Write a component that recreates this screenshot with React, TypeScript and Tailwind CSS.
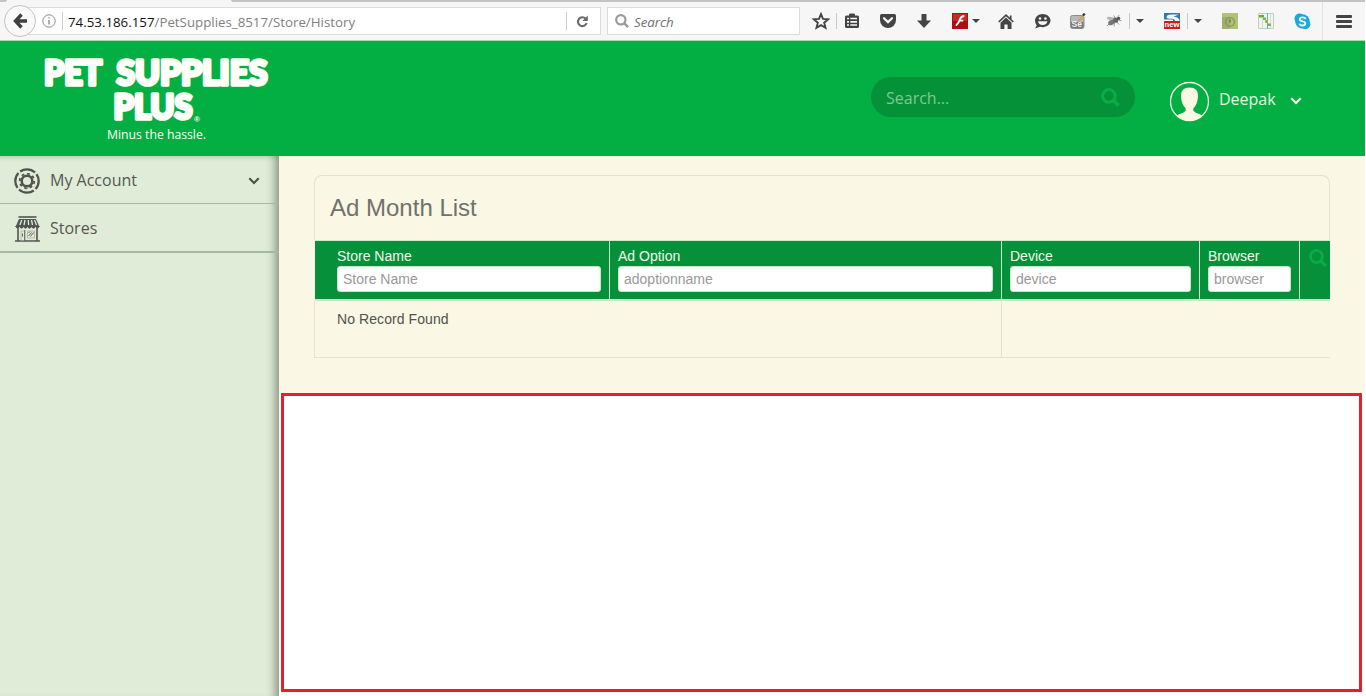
import React from "react";

const Caret = () => (
  <svg width="8" height="4" viewBox="0 0 8 4"><path d="M0 0h8L4 4z" fill="#444" /></svg>
);

const Chevron = ({ color }: { color: string }) => (
  <svg width="12" height="8" viewBox="0 0 12 8" fill="none" stroke={color} strokeWidth="2.2">
    <path d="M1.3 1.3 6 6l4.7-4.7" />
  </svg>
);

const Magnifier = ({ size, color }: { size: number; color: string }) => (
  <svg width={size} height={size} viewBox="0 0 18 18" fill="none" stroke={color}>
    <circle cx="7.5" cy="7.5" r="6" strokeWidth="2.8" />
    <path d="m11.8 11.8 5 5" strokeWidth="3.2" />
  </svg>
);

const Slot = ({ children }: { children: React.ReactNode }) => (
  <div className="flex w-9 shrink-0 items-center justify-center">{children}</div>
);

const Drop = () => (
  <div className="flex w-[22px] shrink-0 items-center">
    <span className="-ml-[3px] h-4 w-px bg-[#c8c8c8]" />
    <span className="ml-1.5"><Caret /></span>
  </div>
);

function BrowserBar() {
  return (
    <div className="flex h-[41px] w-[1365px] flex-col border-b border-[#a5d8b4] bg-[#f6f6f6]">
      <div className="flex h-0.5 shrink-0">
        <div className="w-[7px] rounded-br bg-[#c3c3c3]" />
        <div className="w-[224px]" />
        <div className="flex-1 rounded-bl bg-[#c3c3c3]" />
      </div>
      <div className="flex h-[38px] items-center">
        <div className="z-10 ml-1 flex size-8 shrink-0 items-center justify-center rounded-full border border-[#c3c3c3] bg-[#f9f9f9]">
          <svg width="14" height="16" viewBox="0 0 14 16" fill="none" stroke="#404040" strokeWidth="3.4">
            <path d="M8.5 1.500 2.500 8l6 6.500M3 8h11" />
          </svg>
        </div>
        <div className="-ml-4 flex h-7 w-[581px] shrink-0 items-center border border-[#dcdcdc] bg-white">
          <svg className="ml-[21px]" width="14" height="14" viewBox="0 0 14 14" fill="none" stroke="#8c8c8c">
            <circle cx="7" cy="7" r="6.2" />
            <path d="M7 6v4.500M7 3.200v1.400" strokeWidth="1.4" />
          </svg>
          <span className="ml-1.5 h-[18px] w-px bg-[#cfcfcf]" />
          <span className="ml-[5px] w-[498px] whitespace-nowrap pt-[3px] font-['Open_Sans',sans-serif] text-[13.3px] text-[#808080]">
            <span className="text-[#111]">74.53.186.157</span>/PetSupplies_8517/Store/History
          </span>
          <span className="h-[18px] w-px bg-[#cfcfcf]" />
          <svg className="ml-[9px]" width="13" height="13" viewBox="0 0 13 13">
            <path d="M9.600 3.700A4.400 4.400 0 1 0 10.600 8" fill="none" stroke="#6b6b6b" strokeWidth="2.1" />
            <path d="M11.800.5v5.400H6.400z" fill="#6b6b6b" />
          </svg>
        </div>
        <div className="ml-1.5 flex h-7 w-[193px] shrink-0 items-center border border-[#dcdcdc] bg-white pl-[7px]">
          <Magnifier size={14} color="#999" />
          <span className="ml-[5px] pt-[3px] font-['Open_Sans',sans-serif] text-[13.3px] italic text-[#707070]">Search</span>
        </div>
        <svg className="ml-3 shrink-0" width="18" height="18" viewBox="0 0 18 18" fill="none" stroke="#444" strokeWidth="1.9">
          <path d="m9 2.100 2 4.800 5.200.4-4 3.400 1.300 5.100L9 13.100l-4.500 2.700 1.300-5.100-4-3.400L7 6.900z" />
        </svg>
        <span className="ml-1.5 h-4 w-px bg-[#c8c8c8]" />
        <div className="-ml-[3px] flex">
          <Slot>
            <svg width="16" height="16" viewBox="0 0 16 16">
              <path d="M5 2.500V1.700Q5 .5 6.200.5h3.600Q11 .5 11 1.700v.8h2.500q1.500 0 1.500 1.500v9.500q0 1.500-1.500 1.500h-11Q1 15 1 13.500V4q0-1.500 1.500-1.500z" fill="#444" />
              <path d="M3 5.500h2M6.300 5.500H13M3 8.800h2M6.300 8.800H13M3 12h2M6.300 12H13" stroke="#f6f6f6" strokeWidth="1.7" />
            </svg>
          </Slot>
          <Slot>
            <svg width="16" height="14" viewBox="0 0 16 14">
              <path d="M1.500 0h13Q16 0 16 1.500V6a8 8 0 0 1-16 0V1.500Q0 0 1.500 0z" fill="#444" />
              <path d="m4 4.200 4 3.900 4-3.900" fill="none" stroke="#f6f6f6" strokeWidth="2.2" strokeLinecap="round" />
            </svg>
          </Slot>
          <Slot>
            <svg width="14" height="14" viewBox="0 0 14 14"><path d="M4.500 0h5v6.500H14L7 14 0 6.500h4.500z" fill="#444" /></svg>
          </Slot>
          <Slot>
            <svg width="16" height="16" viewBox="0 0 16 16">
              <path d="M0 0h16v16H0z" fill="#a80f12" /><path d="M1 1h14v7H1z" fill="#c22b26" />
              <path d="M12.400 3Q9 3 8 6.300T4 12.700M7.200 7.700h4" fill="none" stroke="#fff" strokeWidth="1.8" />
            </svg>
          </Slot>
          <div className="flex w-2.5 items-center"><div className="-ml-1.5 flex shrink-0"><Caret /></div></div>
          <Slot>
            <svg width="16" height="15" viewBox="0 0 16 15">
              <path d="M.7 8 8 1.200 15.300 8M12.700 1.500V5" fill="none" stroke="#444" strokeWidth="1.7" />
              <path d="m8 3.500 5.500 5.200V15H9.600v-4.400H6.400V15H2.500V8.700z" fill="#444" />
            </svg>
          </Slot>
          <Slot>
            <svg width="17" height="15" viewBox="0 0 17 15">
              <path d="M8.700 0C13 0 16.500 2.900 16.500 6.600s-3.500 6.600-7.800 6.600q-1.500 0-2.800-.4L1 14.600l1.700-3.200Q1 9.500 1 6.600C1 2.900 4.400 0 8.700 0z" fill="#444" />
              <circle cx="6" cy="4.5" r="1.3" fill="#f6f6f6" /><circle cx="11.4" cy="4.5" r="1.3" fill="#f6f6f6" />
              <path d="M4 7.200h9.400q-.7 3.800-4.700 3.800T4 7.200z" fill="#f6f6f6" />
            </svg>
          </Slot>
          <Slot>
            <svg width="16" height="16" viewBox="0 0 16 16">
              <rect x=".5" y="2.500" width="13.500" height="13" rx="2" fill="#b8b8b8" stroke="#8c8c8c" />
              <path d="M1 9h12.500v4.500q0 1.500-1.500 1.500H2.500Q1 15 1 13.500z" fill="#777" />
              <text x="1.5" y="14.2" fontSize="8.5" fontWeight="700" fill="#f3f3f3" fontFamily="Liberation Sans">Se</text>
              <path d="m8.500 8.500 5-6.500" stroke="#cfa653" strokeWidth="2.2" /><path d="m13 2.700 1.700-2.200" stroke="#333" strokeWidth="2.2" />
            </svg>
          </Slot>
          <Slot>
            <svg width="16" height="14" viewBox="0 0 16 14" fill="none">
              <ellipse cx="5" cy="4.8" rx="4.2" ry="1.8" transform="rotate(14 5 4.8)" fill="#b5b5b5" />
              <ellipse cx="5.500" cy="8.500" rx="3.500" ry="2.400" transform="rotate(-25 5.5 8.5)" fill="#777" />
              <circle cx="9.700" cy="6.200" r="2.600" fill="#666" /><circle cx="12.600" cy="4.400" r="1.700" fill="#555" />
              <path d="m9 4-1-2.500M11.500 3.500 13 1M12.500 6l3 .8M11 8l2 2.500M8.500 9l-.5 3.500M3.500 9.500 1 12" stroke="#888" strokeWidth=".8" />
            </svg>
          </Slot>
          <Drop />
          <Slot>
            <svg width="16" height="16" viewBox="0 0 16 16">
              <path d="M0 0h16v8H0z" fill="#287ea5" />
              <path d="M15 1.500H7Q2.500 1.800 2.500 4.200 3 6 8 5.800q3 .2 3 2.200h4.500Q15.500 4 9.500 3.800 12 2.500 15 1.500zM0 6.500h9V8H0z" fill="#eef7fa" />
              <path d="M0 8h16v8H0z" fill="#d51820" />
              <text x=".5" y="14.3" fontSize="7.5" fontWeight="700" fill="#fff" fontFamily="Liberation Sans" textLength="15" lengthAdjust="spacingAndGlyphs">new</text>
            </svg>
          </Slot>
          <Drop />
          <Slot>
            <svg width="16" height="16" viewBox="0 0 16 16" fill="none">
              <path d="M0 0h16v16H0z" fill="#b2c17a" /><path d="M0 4h8v12H0z" fill="#a0b069" />
              <circle cx="8" cy="9" r="4.3" stroke="#86955b" strokeWidth="1.3" /><path d="M8 6.500v3" stroke="#74824c" strokeWidth="1.6" />
            </svg>
          </Slot>
          <Slot>
            <svg width="16" height="16" viewBox="0 0 16 16">
              <path d="M.5.5h15v15H.5z" fill="#f2f5ef" stroke="#c4cec0" /><path d="M4.500 1v14M12.500 1v14" stroke="#d5dccf" />
              <path d="M1 2h5v2.500H1z" fill="#6fac3d" /><path d="M5 4.500h3V7H5zM10 10.500h3V13h-3z" fill="#78b64a" />
              <path d="M7 7h2v3H7z" fill="#dda42f" /><path d="M9.500 0v16" stroke="#51b9bd" />
            </svg>
          </Slot>
          <Slot>
            <svg width="17" height="17" viewBox="0 0 17 17">
              <circle cx="5.5" cy="5.5" r="5" fill="#19a9dc" /><circle cx="11.3" cy="11.3" r="5" fill="#19a9dc" /><circle cx="8.4" cy="8.4" r="7.2" fill="#19a9dc" />
              <path d="M11.400 6Q11 4.400 8.500 4.400T5.700 6.300q0 1.500 2.800 2t2.800 2.200q0 2-2.800 2-2.700 0-3-1.900" fill="none" stroke="#fff" strokeWidth="1.8" />
            </svg>
          </Slot>
        </div>
        <span className="ml-0.5 h-[38px] w-px bg-[#e2e2e2]" />
        <svg className="ml-[13px]" width="16" height="13" viewBox="0 0 16 13" fill="#444">
          <rect width="16" height="3" rx="1" /><rect y="5" width="16" height="3" rx="1" /><rect y="10" width="16" height="3" rx="1" />
        </svg>
      </div>
    </div>
  );
}

function Header() {
  return (
    <header className="flex h-[115px] w-[1365px] bg-[#03af42] font-['Open_Sans',sans-serif]">
      <svg className="ml-10 mt-2.5 shrink-0 overflow-visible" width="235" height="95" viewBox="40 51 235 95" fill="#fdfff8">
        <g fontFamily="Lato" fontWeight="900" fontSize="34" stroke="#fdfff8" strokeWidth="3.6" strokeLinejoin="round">
          <text x="44" y="84.5" textLength="58" lengthAdjust="spacingAndGlyphs">PET</text>
          <text x="116.500" y="84.5" textLength="151" lengthAdjust="spacingAndGlyphs">SUPPLIES</text>
          <text x="113.500" y="119.300" textLength="79" lengthAdjust="spacingAndGlyphs">PLUS</text>
        </g>
        <text x="194" y="121.500" fontFamily="Liberation Sans" fontSize="8" fontWeight="700">®</text>
        <text x="107" y="138.500" fontFamily="Open Sans" fontWeight="500" fontSize="12.500" textLength="99" lengthAdjust="spacingAndGlyphs">Minus the hassle.</text>
      </svg>
      <div className="ml-[596px] mt-9 flex h-10 w-[264px] items-center justify-between rounded-full bg-[#059138] pl-[15px] pr-[15px]">
        <span className="pt-0.5 text-base text-[#80c795]">Search...</span>
        <Magnifier size={19} color="#08ae45" />
      </div>
      <div className="ml-[34px] mt-10 flex h-[41px] items-center">
        <svg width="41" height="41" viewBox="0 0 41 41">
          <circle cx="20.5" cy="20.5" r="19" fill="none" stroke="#fbfdf0" strokeWidth="1.3" />
          <path d="M20.500 6.500Q29.500 6.500 29 15q-.2 8-4.700 12.500v2.300q1.700 2.200 5 3 2.500.6 3.700 1.700-5.200 5.300-12.500 5.300T8 34.500q1.200-1.100 3.700-1.700 3.300-.8 5-3v-2.300Q12.200 23 12 15q-.5-8.500 8.500-8.500z" fill="#fbf8e4" />
        </svg>
        <span className="-mt-[5px] ml-[9px] text-base text-[#e4f6e0]">Deepak</span>
        <span className="-mt-0.5 ml-3.5"><Chevron color="#fbfdf0" /></span>
      </div>
    </header>
  );
}

function Sidebar() {
  return (
    <aside className="w-[279px] shrink-0 bg-[#e0ecd7] font-['Open_Sans',sans-serif] text-base text-[#545853] shadow-[inset_-11px_0_9px_-7px_rgba(70,85,65,0.55),inset_0_6px_6px_-6px_rgba(70,110,65,0.35)]">
      <div className="flex h-12 items-center border-b border-[#a6b8a3] pl-3.5 pt-0.5">
        <svg width="26" height="26" viewBox="0 0 26 26" fill="none" stroke="#50544f">
          <circle cx="13" cy="13" r="11.7" strokeWidth="2.3" pathLength="100" strokeDasharray="22 3" strokeDashoffset="10" />
          <circle cx="13" cy="13" r="7.3" strokeWidth="1.8" pathLength="80" strokeDasharray="5 5" />
          <circle cx="13" cy="13" r="5.3" strokeWidth="2.6" />
        </svg>
        <span className="-mt-0.5 ml-2.5 flex-1">My Account</span>
        <span className="mr-[19px]"><Chevron color="#4d524c" /></span>
      </div>
      <div className="flex h-[49px] items-center border-b-2 border-[#a6b8a3] pl-[15px] pt-0.5">
        <svg width="25" height="26" viewBox="0 0 25 26" fill="none" stroke="#50544f">
          <path d="M3.500 1h18" strokeWidth="1.6" />
          <path d="M4 3h17l3.500 8h-24z" fill="#50544f" stroke="none" />
          <path d="M6.800 4 4.800 9M10 4 9 9M13.300 4l.3 5M16.500 4l1 5M19.500 4l2 5" stroke="#e0ecd7" strokeWidth="1.3" />
          <path d="M.5 10.500q2 3 4 0 2 3.500 4 0 2 3.500 4 0 2 3.500 4 0 2 3.500 4 0 2 3 4 0" fill="#50544f" />
          <path d="M3 12v12.500M22 12v12.500M0 25h25" strokeWidth="1.6" />
          <path d="M6 15h3.500v9.500H6zM12.500 15h7v7h-7z" stroke="#a1a99d" strokeWidth=".7" />
          <path d="M9.800 14v11M7.500 17.500v3M13.500 20l3-3.500M15.500 20.500l3-4M13.500 17l1.500-1.500" strokeWidth=".9" />
        </svg>
        <span className="ml-2.5 -mt-0.5">Stores</span>
      </div>
    </aside>
  );
}

const columns = [
  { label: "Store Name", hint: "Store Name", cell: "w-[295px] pl-[22px]" },
  { label: "Ad Option", hint: "adoptionname", cell: "w-[392px] pl-2" },
  { label: "Device", hint: "device", cell: "w-[198px] pl-2" },
  { label: "Browser", hint: "browser", cell: "w-[100px] pl-2" },
];

function AdMonthList() {
  return (
    <section className="h-[237px] w-[1086px] bg-[#faf7e4] pl-[35px] pt-[19px] font-['Liberation_Sans',Arial,sans-serif]">
      <h1 className="h-[65px] w-[1016px] rounded-t-lg border border-b-0 border-[#e2e2d9] pl-[15px] pt-3.5 text-2xl leading-9 text-[#70716b]">
        Ad Month List
      </h1>
      <div className="ml-px flex h-[61px] w-[1015px] border-b-2 border-t border-b-[#c8e8ca] border-t-[#c4edcc] bg-[#069039]">
        {columns.map((c) => (
          <div key={c.label} className={`${c.cell} shrink-0 border-r border-[#cdebd0] pr-2 pt-[5px]`}>
            <div className="text-sm leading-5 text-[#eefce9]">{c.label}</div>
            <input className="block h-[26px] w-full rounded-[3px] border border-[#c5e7cb] bg-white px-[5px] text-sm placeholder:text-[#999]" placeholder={c.hint} />
          </div>
        ))}
        <div className="pl-[9px] pt-2"><Magnifier size={18} color="#08ae45" /></div>
      </div>
      <div className="flex h-[57px] w-[1016px] border-b border-l border-[#e2e2d9] text-sm text-[#50524c]">
        <div className="w-[687px] border-r border-[#e0e0db] pl-[22px] pt-2 tracking-[0.08px]">No Record Found</div>
      </div>
    </section>
  );
}

export default function App() {
  return (
    <div className="h-[696px] w-[1366px] overflow-hidden bg-white">
      <BrowserBar />
      <Header />
      <main className="flex h-[540px]">
        <Sidebar />
        <div>
          <AdMonthList />
          <div className="ml-0.5 h-[299px] w-[1081px] border-[3px] border-[#e5202a] bg-white" />
        </div>
      </main>
    </div>
  );
}
